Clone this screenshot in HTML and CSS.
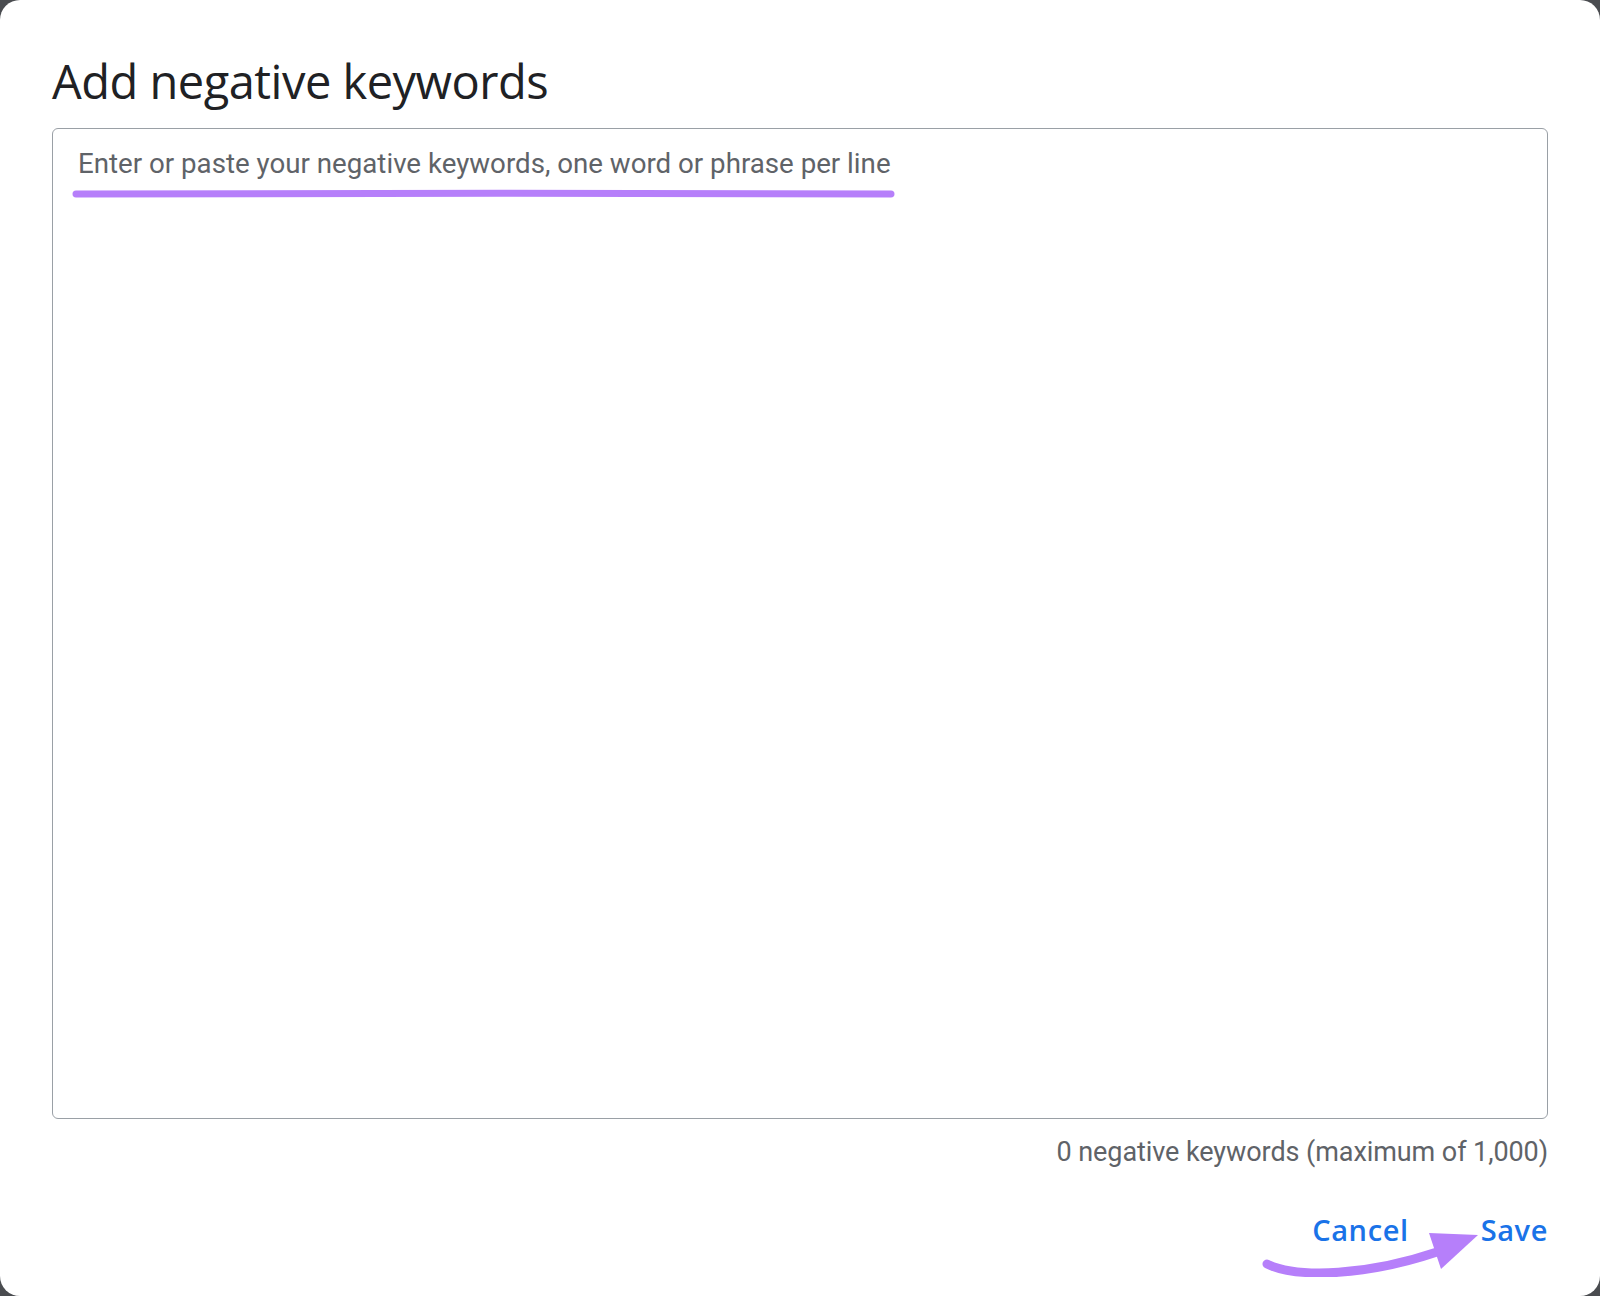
FILE: index.html
```html
<!DOCTYPE html>
<html lang="en">
<head>
    <meta charset="UTF-8">
    <meta name="viewport" content="width=device-width, initial-scale=1.0">
    <title>Add negative keywords</title>
    <link rel="stylesheet" href="styles.css">
</head>
<body>

<div class="dialog">
    <h1>Add negative keywords</h1>

    <div class="field">
        <textarea id="keywords" placeholder="Enter or paste your negative keywords, one word or phrase per line"></textarea>
        <svg class="mark-underline" width="824" height="14" viewBox="0 0 824 14">
            <path d="M4 7 C 200 6, 600 6, 819 7" fill="none" stroke="#b67ffa" stroke-width="7" stroke-linecap="round"/>
        </svg>
    </div>

    <div class="counter">0 negative keywords (maximum of 1,000)</div>

    <div class="actions">
        <button type="button" class="btn">Cancel</button>
        <button type="button" class="btn">Save</button>
        <svg class="mark-arrow" width="230" height="60" viewBox="0 0 230 60">
            <path d="M8 47 C 40 62, 110 58, 178 35" fill="none" stroke="#b67ffa" stroke-width="9" stroke-linecap="round"/>
            <polygon points="170,16 219,18 182,52" fill="#b67ffa"/>
        </svg>
    </div>
</div>

</body>
</html>
```

FILE: styles.css
```css
body {
    margin: 0;
    padding: 0;
    background-color: #4a4c50;
}
.dialog {
    box-sizing: border-box;
    height: 1296px;
    padding: 53px 52px 0;
    background-color: #fff;
    border-radius: 20px;
}
h1 {
    margin: 0 0 19px;
    font-family: "Open Sans", sans-serif;
    font-weight: 400;
    font-size: 47px;
    line-height: 56px;
    letter-spacing: -0.5px;
    color: #202124;
}
.field {
    position: relative;
}
textarea {
    display: block;
    box-sizing: border-box;
    width: 100%;
    height: 991px;
    margin: 0;
    padding: 18px 25px;
    border: 1.5px solid #9aa0a6;
    border-radius: 6px;
    resize: none;
    font-family: Roboto, sans-serif;
    font-size: 27.7px;
    line-height: 33px;
    color: #202124;
    outline: none;
}
textarea::placeholder {
    color: #5f6368;
    opacity: 1;
}
.mark-underline {
    position: absolute;
    left: 20px;
    top: 59px;
}
.counter {
    margin-top: 17px;
    text-align: right;
    font-family: Roboto, sans-serif;
    font-size: 27px;
    line-height: 32px;
    letter-spacing: -0.08px;
    color: #5f6368;
}
.actions {
    position: relative;
    display: flex;
    justify-content: flex-end;
    gap: 72px;
    margin-top: 46px;
}
.btn {
    padding: 0;
    border: none;
    background: none;
    font-family: "Open Sans", sans-serif;
    font-weight: 600;
    font-size: 29px;
    line-height: 32px;
    letter-spacing: 0.6px;
    color: #1a73e8;
    cursor: pointer;
}
.mark-arrow {
    position: absolute;
    left: 1207px;
    top: 3px;
}
```
